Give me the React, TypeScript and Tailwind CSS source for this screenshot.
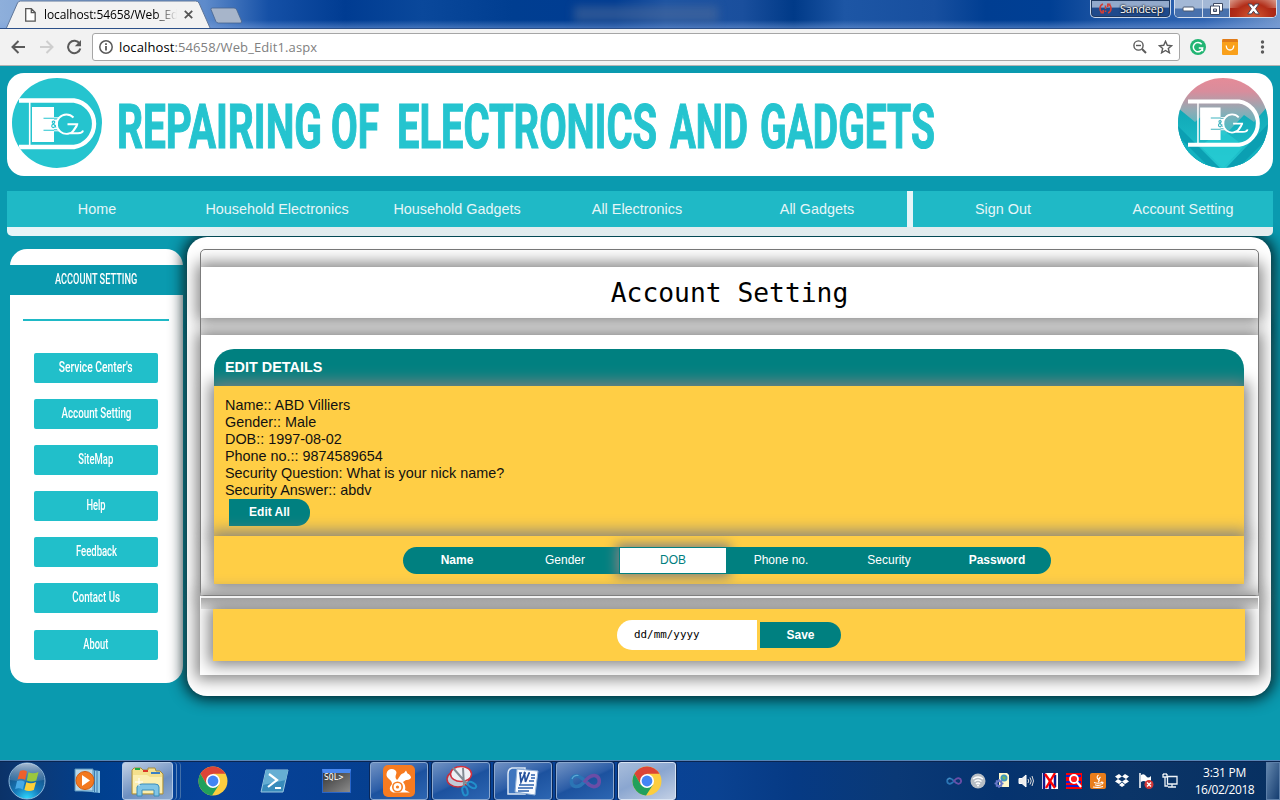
import type { ReactNode } from "react";

const segoe = "font-['Open_Sans','Noto_Sans',sans-serif]";
const arial = "font-['Liberation_Sans',Arial,sans-serif]";

function TitleBar() {
  return (
    <div className="relative flex h-[29px] shrink-0 items-start justify-between overflow-hidden border-b border-[#2b4f88] bg-[linear-gradient(90deg,#8eafdb_0%,#7397cf_8%,#5e8bcb_16%,#1550a6_21%,#003c92_27%,#0a489b_33%,#003e91_40%,#003c92_48%,#1d54a3_52%,#1a4f9d_58%,#003a88_62%,#1d56a5_66%,#174f9f_73%,#003e92_77%,#003f94_82%,#1b53a2_86%,#2f64b2_94%,#7397cc_100%)]">
      <div className="absolute inset-x-0 bottom-0 h-2 bg-linear-to-b from-transparent to-[#7ba0dc]/50" />
      <div className="absolute top-1.5 left-[574px] h-4 w-36 bg-[#536d99]/50 blur-[4px]" />
      <div className="relative flex h-[29px] w-[250px] items-center pl-[25px]">
        <svg className="absolute top-0 left-0" width="250" height="29" viewBox="0 0 250 29">
          <path d="M6 29 L17.500 3 Q18.500 1 20.500 1 H195.500 Q198 1 199 3 L210.500 29Z" fill="#f2f2f2" stroke="#5f7699" strokeWidth="1" />
          <path d="M211 9.500 Q210.600 8 212.500 8 H234 Q236 8 236.800 10 L241.500 21 Q242.200 23 240.200 23 H218.500 Q216.500 23 215.800 21.200Z" fill="#a7b5ca" stroke="#47658f" strokeWidth=".8" />
        </svg>
        <svg className="relative" width="11" height="14" viewBox="0 0 11 14" fill="#fff" stroke="#555" strokeWidth="1.300">
          <path d="M.7.7H6.300L10.200 4.600V13.200H.7Z M6.300.7V4.600H10.200" />
        </svg>
        <span className={`relative ml-2 w-[133px] overflow-hidden text-[12px] leading-4 tracking-[-0.100px] whitespace-nowrap text-black ${segoe} [mask-image:linear-gradient(90deg,#000_84%,transparent_100%)]`}>
          localhost:54658/Web_Edi
        </span>
        <svg className="relative ml-[7px]" width="9" height="9" viewBox="0 0 9 9" stroke="#555" strokeWidth="1.800">
          <path d="M.8.8 8.200 8.200M8.200.8.8 8.200" />
        </svg>
      </div>
      <div className="relative flex gap-[3px] pr-[3px]">
        <div className="flex h-[18px] w-[81px] items-center gap-2 rounded-b-[5px] border border-t-0 border-[#c6d6ec] bg-linear-to-b from-[#92a9cb] from-40% to-[#1f4a8c] to-50% pl-[8px] shadow-[inset_0_0_0_1px_#20395f]">
          <svg width="13" height="11" viewBox="0 0 13 11" fill="none" stroke="#d03f37" strokeWidth="1.600">
            <path d="M4 1 Q1 2 1 5.500T4 10M1.500 9.800H4.200V7M9 10Q12 9 12 5.500T9 1M11.500 1.200H8.800V4M6.500 2.500V6M6.500 7.500V9" />
          </svg>
          <span className={`text-[11px] leading-4 tracking-[-0.200px] text-white [text-shadow:0_0_2px_#111,0_0_2px_#111] ${segoe} font-medium`}>Sandeep</span>
        </div>
        <div className="flex h-[18px] w-[103px] overflow-hidden rounded-b-[5px] border border-t-0 border-[#d3deee] shadow-[inset_0_0_0_1px_#20395f]">
          <div className="flex w-7 items-center justify-center border-r border-[#d0dced] bg-linear-to-b from-[#a3b8d6] from-45% to-[#4871ad] to-55%">
            <svg width="13" height="6"><rect x="1" y="1" width="11" height="4" rx="1" fill="#fff" stroke="#4b5870" /></svg>
          </div>
          <div className="flex w-[27px] items-center justify-center border-r border-[#d0dced] bg-linear-to-b from-[#a3b8d6] from-45% to-[#4871ad] to-55%">
            <svg width="13" height="12" viewBox="0 0 13 12" stroke="#3f4b63" fill="#fff">
              <path d="M3.500.5H12.500V8H3.500Z" /><path fillRule="evenodd" d="M.5 3H9.500V11.500H.5ZM3.500 6H6.500V8.500H3.500Z" />
            </svg>
          </div>
          <div className="flex flex-1 items-center justify-center bg-[radial-gradient(ellipse_at_50%_100%,#d55c35_0%,#b22d18_55%,transparent_100%),linear-gradient(#d99a8a_45%,#a11f12_50%)]">
            <svg width="13" height="12" viewBox="0 0 13 12"><path d="M1 1H4.500L6.500 3.300 8.500 1H12L8.600 5.700 12.300 11H8.600L6.500 8.200 4.400 11H.7L4.400 5.700Z" fill="#fff" stroke="#4a4557" /></svg>
          </div>
        </div>
      </div>
    </div>
  );
}

function Toolbar() {
  return (
    <div className="flex h-[37px] shrink-0 items-center border-b border-[#b3b3b3] bg-[#f2f2f2] pl-[11px]">
      <svg width="15" height="14" viewBox="0 0 15 14" fill="none" stroke="#5a5a5a" strokeWidth="2"><path d="M14 7H1.500M7.500 1 1.500 7l6 6" /></svg>
      <svg className="ml-[13px]" width="15" height="14" viewBox="0 0 15 14" fill="none" stroke="#cecece" strokeWidth="2"><path d="M1 7h12.500M7.500 1l6 6-6 6" /></svg>
      <svg className="ml-3" width="16" height="16" viewBox="0 0 16 16" fill="none" stroke="#5a5a5a" strokeWidth="2">
        <path d="M13.600 4.800A6.200 6.200 0 1 0 14.300 9.500" /><path d="M15 1V7.200H8.800Z" fill="#5a5a5a" stroke="none" />
      </svg>
      <div className="ml-[10px] flex h-7 w-[1088px] items-center rounded-[3px] border border-[#a6a6a6] bg-white px-[6px]">
        <svg width="14" height="14" viewBox="0 0 14 14" fill="none" stroke="#5a5a5a" strokeWidth="1.500"><circle cx="7" cy="7" r="6.200" /><path d="M7 6V10.500M7 3.300V4.900" strokeWidth="1.800" /></svg>
        <span className={`ml-[6px] flex-1 text-[13px] leading-5 tracking-[0.110px] text-black ${segoe}`}>
          localhost<span className="text-[#808080]">:54658/Web_Edit1.aspx</span>
        </span>
        <svg width="14" height="14" viewBox="0 0 14 14" fill="none" stroke="#5a5a5a" strokeWidth="1.400"><circle cx="5.500" cy="5.500" r="4.600" /><path d="M3 5.500H8" /><path d="M9 9l4 4" strokeWidth="1.900" /></svg>
        <svg className="ml-[11px]" width="15" height="14" viewBox="0 0 15 14" fill="none" stroke="#5a5a5a" strokeWidth="1.400"><path d="M7.500 1.300 9.300 5.300 13.600 5.700 10.300 8.500 11.400 12.800 7.500 10.500 3.600 12.800 4.700 8.500 1.400 5.700 5.700 5.300Z" /></svg>
      </div>
      <svg className="ml-[10px]" width="16" height="16" viewBox="0 0 16 16"><circle cx="8" cy="8" r="8" fill="#22b573" /><path d="M11.700 5.200A4.700 4.700 0 1 0 12.600 9H8.800M12.500 12.200V9" fill="none" stroke="#fff" strokeWidth="1.500" /></svg>
      <svg className="ml-4" width="16" height="16" viewBox="0 0 16 16"><rect width="16" height="16" rx="1" fill="#f9a01b" /><path d="M1 0H15L16 3H0Z" fill="#e07b1a" /><path d="M4.200 6.500Q4.500 11 8 11T11.800 6.500" fill="none" stroke="#fff" strokeWidth="1.300" /></svg>
      <svg className="ml-[22px]" width="5" height="14" viewBox="0 0 5 14" fill="#5a5a5a"><circle cx="2.500" cy="2" r="1.700" /><circle cx="2.500" cy="7" r="1.700" /><circle cx="2.500" cy="12" r="1.700" /></svg>
    </div>
  );
}

function Emblem({ tint }: { tint: string }) {
  return (
    <g>
      <g fill="none" stroke="#fff">
        <path d="M7 22.500H62A23.500 23.500 0 0 1 62 69H7" strokeWidth="4.300" />
        <path d="M17.700 24V68" strokeWidth="1.600" />
      </g>
      <path d="M20 29H42V64H20Z" fill="#fff" />
      <path d="M31.500 40.300H44M31.500 52.200H44" stroke={tint} strokeWidth="1.100" />
      <path d="M42 41.400H46V51.200H42Z" fill="#fff" />
      <path d="M42 39.800H48M42 52.800H48" stroke="#fff" strokeWidth="1" />
      <path d="M44.500 49.500 40.500 44.800Q39.800 43.200 41.500 43 43.200 43.300 42.500 44.800L40.200 46.800Q39 49 41.200 49.700 43.500 49.500 44.500 46.800" fill="none" stroke={tint} strokeWidth="1.200" />
      <path d="M61.500 39.500A9.700 9.700 0 1 0 62.500 51.500C64.500 49 65 47.500 65.200 46.300H55.500M65.500 46.300L59.500 55.200H66Q70.500 55.200 71 52.500" fill="none" stroke="#fff" strokeWidth="1.900" />
    </g>
  );
}

function Banner() {
  return (
    <header className="flex h-[103px] items-center justify-between rounded-[17px] bg-white px-[5px] pb-[3px]">
      <svg width="90" height="90" viewBox="0 0 90 90">
        <defs><clipPath id="disc"><circle cx="45" cy="45" r="45" /></clipPath></defs>
        <circle cx="45" cy="45" r="45" fill="#25c4cf" />
        <g clipPath="url(#disc)"><Emblem tint="#25c4cf" /></g>
      </svg>
      <svg className="mr-auto ml-4 overflow-visible" width="820" height="90" viewBox="118 78 820 90" fill="#25c4cf" stroke="#25c4cf" strokeWidth="1.200" fontFamily="Roboto, Liberation Sans, sans-serif" fontWeight="700" fontSize="60.500">
        <text x="117" y="148.300" textLength="205" lengthAdjust="spacingAndGlyphs">REPAIRING</text>
        <text x="331" y="148.300" textLength="48" lengthAdjust="spacingAndGlyphs">OF</text>
        <text x="397" y="148.300" textLength="260" lengthAdjust="spacingAndGlyphs">ELECTRONICS</text>
        <text x="670" y="148.300" textLength="78" lengthAdjust="spacingAndGlyphs">AND</text>
        <text x="760" y="148.300" textLength="175" lengthAdjust="spacingAndGlyphs">GADGETS</text>
      </svg>
      <svg width="90" height="90" viewBox="0 0 90 90">
        <defs>
          <linearGradient id="sky" x1="0" y1="0" x2="0" y2="1"><stop offset="0" stopColor="#e58b98" /><stop offset=".15" stopColor="#d88d9c" /><stop offset=".35" stopColor="#93aab4" /><stop offset=".55" stopColor="#52bac2" /><stop offset="1" stopColor="#1cc7cf" /></linearGradient>
          <linearGradient id="hills" x1="0" y1="0" x2="0" y2="1"><stop offset="0" stopColor="#0fa6b5" /><stop offset="1" stopColor="#22c6cf" /></linearGradient>
        </defs>
        <g clipPath="url(#disc)">
          <rect width="90" height="90" fill="url(#sky)" />
          <path d="M0 30 17 44 24 38 46 58 66 37 76 44 90 28V90H0Z" fill="url(#hills)" />
          <path d="M0 48 42 90H0ZM90 46 48 90H90Z" fill="#0b9fb2" />
          <path d="M0 58 32 90H0ZM90 60 60 90H90Z" fill="#14b2c0" />
          <path d="M45 52 66 68 45 90 22 68Z" fill="#25cbd2" opacity=".8" />
          <g transform="translate(3.500 2.600) scale(.93)"><Emblem tint="#3fb3bf" /></g>
        </g>
      </svg>
    </header>
  );
}

function NavBar() {
  const item = "flex w-[180px] items-center justify-center pt-px text-[14.400px] text-[#e6f6f8]";
  return (
    <nav className={`relative z-10 mt-[15px] flex h-[45px] justify-between overflow-hidden rounded-b-[5px] bg-linear-to-r from-[#e6f5f8] from-12% to-[#e2ecee] to-20% pb-[9px] ${arial}`}>
      <div className="flex bg-[#1fb9c6]">
        {["Home", "Household Electronics", "Household Gadgets", "All Electronics", "All Gadgets"].map((t) => (
          <a key={t} className={item}>{t}</a>
        ))}
      </div>
      <div className="h-9 flex-1 bg-[#e6f5f8]" />
      <div className="flex bg-[#1fb9c6]">
        {["Sign Out", "Account Setting"].map((t) => (
          <a key={t} className={item}>{t}</a>
        ))}
      </div>
    </nav>
  );
}

const links = [
  { label: "Service Center's", squeeze: "scale-x-[0.665]" },
  { label: "Account Setting", squeeze: "scale-x-[0.630]" },
  { label: "SiteMap", squeeze: "scale-x-[0.610]" },
  { label: "Help", squeeze: "scale-x-[0.600]" },
  { label: "Feedback", squeeze: "scale-x-[0.615]" },
  { label: "Contact Us", squeeze: "scale-x-[0.625]" },
  { label: "About", squeeze: "scale-x-[0.600]" },
];

function Sidebar() {
  return (
    <aside className="mt-[13px] flex h-[434px] w-[173px] flex-col rounded-[17px] bg-white pt-4 font-['Roboto','Liberation_Sans',sans-serif] text-[15.500px] font-medium text-white">
      <div className="flex h-[30px] items-center justify-center bg-[#0a9aaf]">
        <span className="origin-center scale-x-[0.595] whitespace-nowrap">ACCOUNT SETTING</span>
      </div>
      <div className="mx-[13px] mt-6 h-[2px] w-[146px] bg-[#1fb9c6]" />
      <div className="mt-8 flex flex-col gap-[16px] pl-6">
        {links.map((l) => (
          <a key={l.label} className="flex h-[30px] w-[124px] items-center justify-center rounded-[2px] bg-[#21bfca] last:mt-px">
            <span className={`origin-center whitespace-nowrap ${l.squeeze}`}>{l.label}</span>
          </a>
        ))}
      </div>
    </aside>
  );
}

function MainPanel() {
  const glow = "shadow-[0_0_15px_4px_#808080]";
  const tab = "flex w-[108px] items-center justify-center pb-px";
  return (
    <main className={`mt-px ml-[4px] h-[459px] w-[1084px] rounded-[20px] bg-white px-[13px] pt-3 shadow-[0_0_15px_3px_#001a20] ${arial}`}>
      <section className="h-[347px] w-[1059px] rounded-[5px] border border-[#777] pt-[17px]">
        <h1 className={`flex h-[51px] items-center justify-center bg-white pt-[2px] font-['DejaVu_Sans_Mono',monospace] text-[26.300px] text-black ${glow}`}>Account Setting</h1>
        <div className={`mt-[17px] h-[260px] bg-white pt-[14px] pr-[14px] pl-[13px] ${glow}`}>
          <div className="flex h-[37px] items-center rounded-t-[20px] bg-[#008080] pl-[11px] text-[14.400px] font-bold text-white">EDIT DETAILS</div>
          <div className={`h-[150px] bg-[#ffce45] pt-[11px] pl-[11px] text-[14.400px] leading-[17px] text-[#111] ${glow}`}>
            <p>Name:: ABD Villiers</p>
            <p>Gender:: Male</p>
            <p>DOB:: 1997-08-02</p>
            <p>Phone no.:: 9874589654</p>
            <p>Security Question: What is your nick name?</p>
            <p>Security Answer:: abdv</p>
            <button className="ml-1 block h-[27px] w-[81px] rounded-r-[13px] bg-[#008080] text-[12px] font-bold text-white">Edit All</button>
          </div>
          <div className={`flex h-12 justify-center bg-[#ffce45] pt-[11px] pr-[4px] ${glow}`}>
            <div className="flex h-[27px] w-[648px] rounded-[14px] bg-[#008080] text-[12px] text-white">
              <span className={`${tab} font-bold`}>Name</span>
              <span className={tab}>Gender</span>
              <span className={`${tab} border border-[#008080] bg-white text-[#008080] shadow-[0_0_12px_3px_#808080]`}>DOB</span>
              <span className={`${tab} z-10 bg-[#008080]`}>Phone no.</span>
              <span className={tab}>Security</span>
              <span className={`${tab} font-bold`}>Password</span>
            </div>
          </div>
        </div>
      </section>
      <section className="h-[79px] w-[1059px] bg-white shadow-[0_0_15px_4px_#808080]">
        <div className="mx-px h-[13px] border-t-2 border-[#f1f1f1] bg-linear-to-b from-[#a8a8a8] to-[#e6e6e6]" />
        <div className={`mr-[14px] ml-[13px] flex h-[52px] items-center justify-center gap-[3px] bg-[#ffce45] ${glow} [clip-path:inset(-11px_-14px_-14px_-13px)]`}>
          <div className="flex h-[30px] w-[140px] items-center rounded-l-[15px] bg-white pt-px pl-[17px] font-['DejaVu_Sans_Mono',monospace] text-[10.900px] text-black">dd/mm/yyyy</div>
          <button className="h-[26px] w-[81px] rounded-r-[13px] bg-[#008080] text-[12px] font-bold text-white">Save</button>
        </div>
      </section>
    </main>
  );
}

function ChromeIcon() {
  return (
    <svg width="30" height="30" viewBox="0 0 30 30">
      <circle cx="15" cy="15" r="14.500" fill="#fccd3f" />
      <path d="M2.400 7.800A14.500 14.500 0 0 1 27.500 7.800H15L8.700 18.500Z" fill="#db4437" />
      <path d="M2.400 7.800A14.500 14.500 0 0 0 14 29.500L21 18.700 15 15 8.700 18.500Z" fill="#21a05c" />
      <circle cx="15" cy="15" r="7" fill="#fff" /><circle cx="15" cy="15" r="5.400" fill="#4285f4" />
    </svg>
  );
}

function TaskButton({ children, active = false }: { children: ReactNode; active?: boolean }) {
  return (
    <div className={`flex h-[38px] w-[58px] items-center justify-center rounded-[3px] border ${active ? "border-[#d8e3f2] bg-[linear-gradient(155deg,#a8bddb,#8aa6d0_45%,#c3d0e5)]" : "border-[#8ba8cf] bg-[linear-gradient(155deg,#7192c3,#2b5da7_48%,#1c529f_52%,#2d66b2)]"} shadow-[0_0_0_1px_#09285a]`}>
      {children}
    </div>
  );
}

function Loop({ size }: { size: number }) {
  return (
    <svg width={size} height={size / 2} viewBox="0 0 32 16" fill="none" strokeWidth="3.600">
      <path d="M17 7C12 13 9.500 14 6.500 13.500 1 12.500 1 4 6.500 2.800 10 2.300 13 5 16 8 19 11.500 21 12.500 23 13" stroke="#2b75b5" />
      <path d="M15 9.500C19 4 22 2 25.500 2.500 31.500 3.500 32 12 26 13.500 23 14 20 12 18 9.500" stroke="#6b4da6" />
      <path d="M3 6Q5 1.500 9.500 2.500" stroke="#5ba8d5" strokeWidth="1.200" />
    </svg>
  );
}

function Taskbar() {
  return (
    <footer className="flex h-10 shrink-0 items-center border-t border-[#5785b8] bg-[linear-gradient(90deg,#0b3268_0%,#0b3a79_3%,#00408f_8%,#07429a_16%,#053f8f_30%,#08439a_48%,#0a4291_56%,#063a84_62%,#0a3976_70%,#05336f_78%,#0b3568_88%,#073061_100%)] pl-2 shadow-[inset_0_1px_0_#0a2550]">
      <svg width="38" height="38" viewBox="0 0 38 38">
        <defs>
          <radialGradient id="orb" cx=".5" cy="1" r=".95"><stop offset="0" stopColor="#30dbff" /><stop offset=".4" stopColor="#1579ba" /><stop offset="1" stopColor="#163f70" /></radialGradient>
          <linearGradient id="shine" x1="0" y1="0" x2="0" y2="1"><stop offset="0" stopColor="#dce9f5" stopOpacity=".75" /><stop offset="1" stopColor="#7aa0c5" stopOpacity=".25" /></linearGradient>
        </defs>
        <circle cx="19" cy="19" r="18" fill="url(#orb)" stroke="#8fb9dc" />
        <path d="M2 18A17 17 0 0 1 36 18Q19 21 2 18Z" fill="url(#shine)" />
        <path d="M12 9Q16 7.500 19 9.500L17.200 18Q13.500 16 9.500 17.500Z" fill="#f0602b" />
        <path d="M20.500 10.200Q25 12.500 30.500 10L28.300 18.500Q23.500 20.500 18.800 18.500Z" fill="#9bc83e" />
        <path d="M9 19Q13 17.500 16.800 19.700L14.800 27.500Q11 25.500 7.200 27Z" fill="#48a9e6" />
        <path d="M18.300 20.200Q23 22.500 28 20L25.800 28Q21 30 16.400 28Z" fill="#ffd038" />
      </svg>
      <svg className="ml-[28px]" width="28" height="26" viewBox="0 0 28 26">
        <path d="M8 1 26 3V25L8 23Z" fill="#90c8e8" /><path d="M23 2V25M20.500 2V25" stroke="#3d7cb0" />
        <path d="M1 1H19V23H1Z" fill="#b8d8ea" stroke="#5694bd" />
        <circle cx="11" cy="12.500" r="9" fill="#f37920" stroke="#d35e12" /><path d="M8 7 16 12.500 8 18Z" fill="#fff" />
      </svg>
      <div className="ml-5 flex h-[38px] w-[51px] items-center justify-center rounded-[3px] border border-[#b2c9e6] bg-[linear-gradient(155deg,#c3d1e5,#6c8fc1_60%,#8caacf)]">
        <svg width="34" height="32" viewBox="0 0 34 32">
          <path d="M1 5 3 3H10L12 5H17V3H24L25 6H29L32 9V29H1Z" fill="#f4e08d" stroke="#a78d3c" />
          <path d="M4 3H9V5H4Z" fill="#1fab3f" /><path d="M12 5H17V7H12Z" fill="#db3828" /><path d="M20 7H29V9H20Z" fill="#3b80c4" />
          <path d="M2 10H16L19 12H31V28H2Z" fill="#fbeeb0" /><path d="M6 31V22Q7 19 11 19H24Q28 19 28 22V31H23V25H11V31Z" fill="#80c5e6" stroke="#3b8dbb" />
          <path d="M8 13V21M4 17H12" stroke="#fff" />
        </svg>
      </div>
      <div className="h-[38px] w-1 rounded-r-sm border-r border-[#5d87bc]" /><div className="h-[38px] w-[4px] rounded-r-sm border-r border-[#426fa8]" />
      <div className="ml-[17px]"><ChromeIcon /></div>
      <svg className="ml-[32px]" width="30" height="24" viewBox="0 0 30 24"><path d="M6 1H28L23 23H1Z" fill="#388bbb" stroke="#9ac8e0" /><path d="M6 1H28L26 11 3 16Z" fill="#65aed3" /><path d="M9 5 17 11 8 18M15 19H21" fill="none" stroke="#fff" strokeWidth="2.200" /></svg>
      <div className="ml-[32px] h-6 w-[29px] border border-[#2865c9] border-t-[4px] border-t-[#4988ef] bg-linear-to-br from-[#393939] to-[#8c8c8c] pl-px font-['DejaVu_Sans_Mono',monospace] text-[8px] leading-[9px] text-white">SQL&gt;</div>
      <div className="ml-[19px] flex gap-1">
        <TaskButton>
          <svg width="32" height="32" viewBox="0 0 32 32">
            <rect width="32" height="32" rx="5" fill="#f77b20" />
            <path d="M9 19C9 14 3 14 3.500 9 4 4 9 3 12 5 16 8 10 11 14 15 17 12 17 9 21 8L23 5.500 24.500 8.500Q28 10 28 13 26 15.500 23 15L20 17Q23 20 22 25L27 27.500H10Q4 25 9 19Z" fill="#fff" />
            <circle cx="14.500" cy="22" r="4.700" fill="none" stroke="#f57d21" strokeWidth="1.600" /><circle cx="14.500" cy="22" r="1.600" fill="#f57d21" />
          </svg>
        </TaskButton>
        <TaskButton>
          <svg width="34" height="34" viewBox="0 0 34 34">
            <ellipse cx="14" cy="15" rx="11" ry="8" fill="#c2cad7" stroke="#c52f3c" strokeWidth="1.500" /><ellipse cx="17" cy="10" rx="10.500" ry="7.500" fill="#edf0f4" stroke="#d2323f" strokeWidth="1.500" />
            <path d="M9 4 24 21M19 4 20 22" stroke="#828b93" strokeWidth="2" />
            <ellipse cx="28" cy="21" rx="2.500" ry="4.500" transform="rotate(-60 28 21)" fill="none" stroke="#228fcb" strokeWidth="2" /><ellipse cx="21" cy="27" rx="2.500" ry="4.500" transform="rotate(-15 21 27)" fill="none" stroke="#228fcb" strokeWidth="2" />
          </svg>
        </TaskButton>
        <TaskButton>
          <svg width="32" height="30" viewBox="0 0 32 30"><path d="M5 2H18V28H1V8Q1 3 5 2Z" fill="#3e75be" stroke="#dce8f5" strokeWidth="1.500" /><path d="M10 3 31 5 28 29 8 26Z" fill="#f8fbff" stroke="#8daed6" /><path d="M12 7H15M16.500 7H19M13 7 14 16 17.500 8 18.500 16 22 7H23" fill="none" stroke="#204e9b" strokeWidth="1.700" /><path d="M24 9H28M24 12H28M22 15H27M12 19H27M11 22H26M11 25H22" stroke="#2b62ad" strokeWidth="1.500" /></svg>
        </TaskButton>
        <TaskButton><Loop size={32} /></TaskButton>
        <TaskButton active><ChromeIcon /></TaskButton>
      </div>
      <div className="ml-auto flex items-center gap-2">
        <div className="flex w-4 justify-center"><Loop size={16} /></div>
        <svg width="16" height="16" viewBox="0 0 16 16"><circle cx="8" cy="8" r="7.500" fill="#b8bec5" /><g fill="none" stroke="#fff" strokeWidth="1.400"><path d="M3 6Q8 2 13 6M4.500 8.500Q8 5.500 11.500 8.500M6 11Q8 9 10 11" /></g><circle cx="8" cy="12.500" r="1" fill="#fff" /></svg>
        <svg width="16" height="17" viewBox="0 0 16 17"><path d="M5 1H13L15 3V15H5Z" fill="#fff7c9" /><circle cx="10" cy="6" r="3.500" fill="#3d96bd" /><path d="M8 5Q10 3 12 6L10 8Z" fill="#74b658" /><circle cx="5" cy="11.500" r="2.600" fill="none" stroke="#6978c9" strokeWidth="2" /><path d="M5 7V9M5 14V16M.5 11.500H2.500M7.500 11.500H9.500M2 8.500 3 9.500M7 13.500 8 14.500M8 8.500 7 9.500M3 13.500 2 14.500" stroke="#6978c9" strokeWidth="1.400" /></svg>
        <svg width="16" height="14" viewBox="0 0 16 14"><path d="M1 4.500H4L8 1V13L4 9.500H1Z" fill="#eee" stroke="#fff" /><path d="M10 5Q11.500 7 10 9M12 3.500Q14.500 7 12 10.500M14 2Q17 7 14 12" fill="none" stroke="#ddd" /></svg>
        <svg width="16" height="16" viewBox="0 0 16 16"><path d="M0 0H16V16H0Z" fill="#fff" /><path d="M2 0V16M13 2V14M8 8V16" stroke="#16168c" strokeWidth="2.500" /><path d="M3 1 13 15M13 0 4 15" stroke="#f00" strokeWidth="2.300" /></svg>
        <svg width="16" height="16" viewBox="0 0 16 16"><path d="M0 0H16V16H0Z" fill="#f00" /><path d="M0 3H15M0 9H15M0 13H15" stroke="#1520ce" strokeWidth="2" /><circle cx="8" cy="6" r="4" fill="#ff2020" stroke="#fff" strokeWidth="1.800" /><path d="M11 9 15 14" stroke="#fff" strokeWidth="2.200" /></svg>
        <svg width="16" height="16" viewBox="0 0 16 16"><rect width="16" height="16" rx="2" fill="#e87d1b" /><path d="M8.500 2Q6 4 8 6T8 9M10.500 4Q8 6 9.500 8M4 9.500Q8 11 12 9.500M5 11.800Q8 13 11 11.800M3 14Q8 15 13 13.500M11 9Q15 9 11.500 11.500" fill="none" stroke="#fff" strokeWidth="1.100" /></svg>
        <svg width="16" height="15" viewBox="0 0 16 15" fill="#fff"><path d="M5 1 8 3.500 4 6 1 3.500ZM11 1 15 3.500 12 6 8 3.500ZM4 6 8 8.500 5 11 1 8.500ZM12 6 15 8.500 11 11 8 8.500ZM8 9.500 11 12 8 14 5 12Z" /></svg>
        <svg width="16" height="16" viewBox="0 0 16 16"><path d="M2 0V15" stroke="#fff" strokeWidth="1.500" /><path d="M3 2Q6 0 8 3T13 3V10Q10 11 8 9T3 9Z" fill="#fff" /><circle cx="11" cy="11.500" r="4.500" fill="#d23636" /><path d="M9 9.500 13 13.500M13 9.500 9 13.500" stroke="#fff" strokeWidth="1.400" /></svg>
        <svg width="16" height="15" viewBox="0 0 16 15" fill="none" stroke="#eef3f8" strokeWidth="1.300"><path d="M5.500 3.500H15V11H5.500ZM10 11V14M6 14H14M1 1V4H5V1M3 4V13H6M2 0V2M4 0V2" /></svg>
      </div>
      <div className={`ml-[14px] flex w-[64px] flex-col items-center pl-px text-[12px] leading-[17px] whitespace-nowrap text-white ${segoe}`}>
        <span className="tracking-[-0.300px]">3:31 PM</span><span className="tracking-[-0.400px]">16/02/2018</span>
      </div>
      <div className="ml-[10px] h-[38px] w-[14px] border border-[#5c7fa9] bg-linear-to-br from-[#6487ad] to-[#143d70]" />
    </footer>
  );
}

export default function App() {
  return (
    <div className="flex h-[800px] w-[1280px] flex-col overflow-hidden bg-[#0a9aaf]">
      <TitleBar />
      <Toolbar />
      <div className="flex min-h-0 flex-1 flex-col bg-[#0a9aaf] px-[7px] pt-[7px]">
        <Banner />
        <NavBar />
        <div className="flex items-start pl-[3px]">
          <Sidebar />
          <MainPanel />
        </div>
      </div>
      <Taskbar />
    </div>
  );
}
